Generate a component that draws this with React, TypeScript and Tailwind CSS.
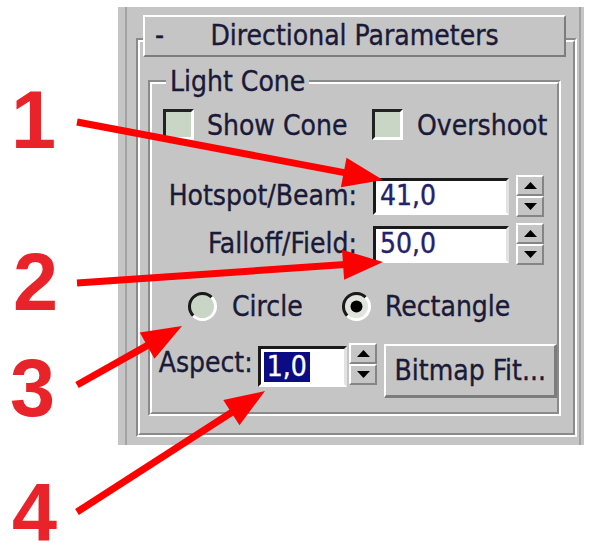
import React from "react";

// Raised two-part spinner (up / down) used next to numeric fields
function Spinner() {
  const half =
    "flex flex-1 items-center justify-center border-2 border-t-white border-l-white border-r-[#858585] border-b-[#858585] bg-[#c5c5c5]";
  return (
    <div className="flex h-[42px] w-[28px] shrink-0 flex-col">
      <div className={half}>
        <svg width="13" height="7" viewBox="0 0 13 7">
          <polygon points="6.5,0 13,7 0,7" fill="#000" />
        </svg>
      </div>
      <div className={half}>
        <svg width="13" height="7" viewBox="0 0 13 7">
          <polygon points="0,0 13,0 6.5,7" fill="#000" />
        </svg>
      </div>
    </div>
  );
}

function CheckBox() {
  return (
    <div className="h-[31px] w-[31px] shrink-0 border-[3px] border-t-[#222] border-l-[#222] border-r-white border-b-white bg-[#c9d6c5]" />
  );
}

function Radio({ on = false }: { on?: boolean }) {
  return (
    <svg width="29" height="29" viewBox="0 0 29 29" className="shrink-0">
      <circle cx="14.5" cy="14.5" r="12" fill={on ? "#dfe5dd" : "#c9d6c5"} />
      <path d="M5.3 23.7 A13 13 0 0 1 23.7 5.3" stroke="#1a1a1a" strokeWidth="3" fill="none" />
      <path d="M23.7 5.3 A13 13 0 0 1 5.3 23.7" stroke="#ffffff" strokeWidth="3" fill="none" />
      {on && <circle cx="14.5" cy="14.5" r="6" fill="#000" />}
    </svg>
  );
}

function SpinRow({ label, value, className }: { label: string; value: string; className: string }) {
  return (
    <div className={`flex h-[42px] items-center ${className}`}>
      <span className="w-[205px] text-right">{label}</span>
      <div className="ml-[16px] flex h-[37px] w-[136px] items-center border-[3px] border-t-[#1a1a1a] border-l-[#1a1a1a] border-r-[#e2e2e2] border-b-white bg-white pl-[4px] text-[#24226a]">
        {value}
      </div>
      <div className="ml-[7px]">
        <Spinner />
      </div>
    </div>
  );
}

// Callout arrow: shaft plus triangular head ending at (x2, y2)
function Arrow({ x1, y1, x2, y2 }: { x1: number; y1: number; x2: number; y2: number }) {
  const dx = x2 - x1;
  const dy = y2 - y1;
  const len = Math.hypot(dx, dy);
  const ux = dx / len;
  const uy = dy / len;
  const hl = 40;
  const hw = 15;
  const bx = x2 - ux * hl;
  const by = y2 - uy * hl;
  const pts = `${x2},${y2} ${bx - uy * hw},${by + ux * hw} ${bx + uy * hw},${by - ux * hw}`;
  return (
    <g>
      <line x1={x1} y1={y1} x2={bx + ux * 2} y2={by + uy * 2} stroke="#ff0000" strokeWidth={7} />
      <polygon points={pts} fill="#ff0000" />
    </g>
  );
}

export default function App() {
  return (
    <div className="relative h-[542px] w-[589px] overflow-hidden bg-white font-['DejaVu_Sans_Condensed','DejaVu_Sans',sans-serif] text-[28px] leading-none text-[#1a1a38] [-webkit-text-stroke:0.35px]">
      <div className="pl-[118px] pt-[7px]">
        <div className="h-[438px] w-[466px] bg-[#c5c5c5] pl-[7px] pr-[3px]">
          <div className="h-full border-x-2 border-[#a3a3a3] pl-[9px] pr-[2px] pt-[31px]">
            {/* rollout frame (etched) */}
            <div className="h-[399px] border-2 border-t-[#8a8a8a] border-l-[#8a8a8a] border-r-white border-b-white">
              <div className="h-full border-2 border-t-white border-l-white border-r-[#8a8a8a] border-b-[#8a8a8a] pl-[3px] pr-[7px]">
                {/* rollout title bar */}
                <div className="mt-[-27px] grid h-[42px] grid-cols-[40px_1fr_40px] items-center border-2 border-t-white border-l-white border-r-[#7c7c7c] border-b-[#7c7c7c] bg-[#c5c5c5]">
                  <span className="pl-[10px]">-</span>
                  <span className="text-center">Directional Parameters</span>
                  <span />
                </div>

                {/* Light Cone group */}
                <div className="relative mx-[5px] mt-[23px] h-[336px] border-2 border-t-[#8a8a8a] border-l-[#8a8a8a] border-r-white border-b-white">
                  <span className="absolute left-[16px] top-0 -translate-y-1/2 bg-[#c5c5c5] px-[4px]">Light Cone</span>
                  <div className="h-full border-2 border-t-white border-l-white border-r-[#8a8a8a] border-b-[#8a8a8a] pt-[24px]">
                    <div className="flex h-[32px] items-center pl-[11px]">
                      <div className="flex w-[209px] items-center gap-[13px]">
                        <CheckBox />
                        <span className="mt-[3px]">Show Cone</span>
                      </div>
                      <div className="flex items-center gap-[14px]">
                        <CheckBox />
                        <span className="mt-[3px]">Overshoot</span>
                      </div>
                    </div>

                    <SpinRow label="Hotspot/Beam:" value="41,0" className="mt-[35px]" />
                    <SpinRow label="Falloff/Field:" value="50,0" className="mt-[6px]" />

                    <div className="mt-[27px] flex h-[29px] items-center pl-[36px]">
                      <div className="flex w-[154px] items-center gap-[15px]">
                        <Radio />
                        <span>Circle</span>
                      </div>
                      <div className="flex items-center gap-[14px]">
                        <Radio on />
                        <span>Rectangle</span>
                      </div>
                    </div>

                    <div className="mt-[22px] flex items-start">
                      <span className="mt-[6px] w-[101px] text-right">Aspect:</span>
                      <div className="ml-[5px] mt-[3px] flex h-[41px] w-[90px] items-center border-[3px] border-t-[#1a1a1a] border-l-[#1a1a1a] border-r-[#e2e2e2] border-b-white bg-white pl-[3px]">
                        <span className="bg-[#0b0b84] px-[3px] leading-[30px] text-white">1,0</span>
                      </div>
                      <div className="ml-[2px]">
                        <Spinner />
                      </div>
                      <div className="ml-[7px] mt-[1px] flex h-[54px] w-[173px] items-center justify-center border-2 border-r-[3px] border-b-[3px] border-t-white border-l-white border-r-[#7c7c7c] border-b-[#7c7c7c] bg-[#c5c5c5]">
                        Bitmap Fit...
                      </div>
                    </div>
                  </div>
                </div>
              </div>
            </div>
          </div>
        </div>
      </div>

      {/* numbered callouts */}
      <svg className="pointer-events-none absolute left-0 top-0" width="589" height="542" viewBox="0 0 589 542">
        <Arrow x1={77} y1={122} x2={383} y2={180} />
        <Arrow x1={77} y1={283} x2={383} y2={262} />
        <Arrow x1={77} y1={385} x2={182} y2={326} />
        <Arrow x1={77} y1={512} x2={265} y2={391} />
        <g fill="#e8232a" fontFamily="'Liberation Sans', Arial, sans-serif" fontWeight="700" fontSize="81">
          <text x="11" y="148">1</text>
          <text x="13" y="310">2</text>
          <text x="10" y="416">3</text>
          <text x="12" y="540">4</text>
        </g>
      </svg>
    </div>
  );
}
